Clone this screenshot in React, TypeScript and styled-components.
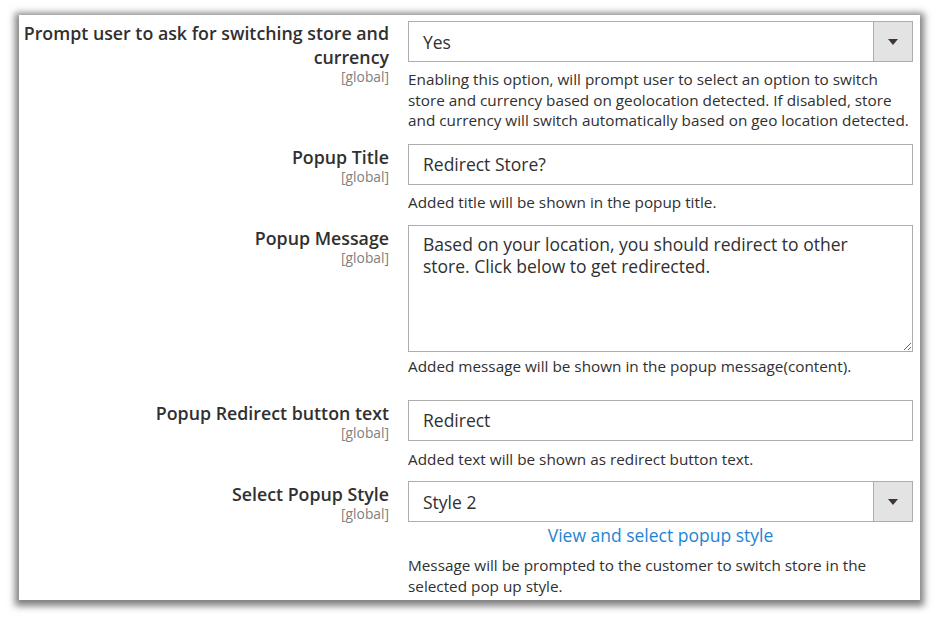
import React from "react";
import styled, { createGlobalStyle } from "styled-components";

const Global = createGlobalStyle`
  html, body { margin: 0; padding: 0; background: #ffffff; }
  body { font-family: "Open Sans", "Noto Sans", sans-serif; color: #303030; }
`;

const Page = styled.div`
  width: 940px;
  height: 617px;
  padding: 15px 20px 0 19px;
  box-sizing: border-box;
`;

const Panel = styled.div`
  width: 901px;
  height: 585px;
  background: #ffffff;
  box-shadow: 0 2px 7px 4px rgba(0, 0, 0, 0.5);
  padding: 6px 7px 0 3px;
  box-sizing: border-box;
  display: flex;
  flex-direction: column;
  overflow: hidden;
`;

const Row = styled.div<{ $gap: number }>`
  display: grid;
  grid-template-columns: 367px 1fr;
  column-gap: 19px;
  margin-bottom: ${(p) => p.$gap}px;
`;

const LabelCol = styled.div<{ $offset: number }>`
  text-align: right;
  padding-top: ${(p) => p.$offset}px;
`;

const Label = styled.div`
  font-size: 17.8px;
  font-weight: 600;
  line-height: 24px;
  color: #303030;
`;

const Scope = styled.div`
  font-size: 13.8px;
  line-height: 15px;
  color: #808080;
  margin-top: 0;
`;

const FieldCol = styled.div`
  display: flex;
  flex-direction: column;
`;

const TextInput = styled.div`
  height: 41px;
  box-sizing: border-box;
  border: 1px solid #adadad;
  padding: 0 14px;
  display: flex;
  align-items: center;
  font-size: 17.5px;
  color: #303030;
`;

const SelectBox = styled.div`
  height: 41px;
  box-sizing: border-box;
  border: 1px solid #adadad;
  display: flex;
  align-items: stretch;
`;

const SelectValue = styled.div`
  flex: 1;
  padding: 0 14px;
  display: flex;
  align-items: center;
  font-size: 17.5px;
  color: #303030;
`;

const SelectArrow = styled.div`
  width: 38px;
  border-left: 1px solid #adadad;
  background: #e3e3e3;
  display: flex;
  align-items: center;
  justify-content: center;
`;

const Triangle = styled.span`
  width: 0;
  height: 0;
  border-left: 5px solid transparent;
  border-right: 5px solid transparent;
  border-top: 6px solid #41362f;
`;

const TextArea = styled.textarea`
  display: block;
  height: 127px;
  box-sizing: border-box;
  border: 1px solid #adadad;
  border-radius: 0;
  padding: 8px 14px;
  margin: 0;
  font-family: "Open Sans", "Noto Sans", sans-serif;
  font-size: 17.5px;
  line-height: 21.5px;
  color: #303030;
  resize: vertical;
  outline: none;
`;

const Note = styled.div<{ $top: number }>`
  margin-top: ${(p) => p.$top}px;
  font-size: 15.3px;
  line-height: 20.5px;
  color: #303030;
`;

const StyleLink = styled.a`
  display: block;
  text-align: center;
  font-size: 17.5px;
  line-height: 23px;
  color: #1f84d4;
  text-decoration: none;
  margin-top: 2px;
`;

function Select({ value }: { value: string }) {
  return (
    <SelectBox>
      <SelectValue>{value}</SelectValue>
      <SelectArrow>
        <Triangle />
      </SelectArrow>
    </SelectBox>
  );
}

export default function App() {
  return (
    <Page>
      <Global />
      <Panel>
        <Row $gap={13}>
          <LabelCol $offset={0}>
            <Label>Prompt user to ask for switching store and currency</Label>
            <Scope>[global]</Scope>
          </LabelCol>
          <FieldCol>
            <Select value="Yes" />
            <Note $top={7}>
              Enabling this option, will prompt user to select an option to switch store and
              currency based on geolocation detected. If disabled, store and currency will
              switch automatically based on geo location detected.
            </Note>
          </FieldCol>
        </Row>
        <Row $gap={13}>
          <LabelCol $offset={1}>
            <Label>Popup Title</Label>
            <Scope>[global]</Scope>
          </LabelCol>
          <FieldCol>
            <TextInput>Redirect Store?</TextInput>
            <Note $top={7}>Added title will be shown in the popup title.</Note>
          </FieldCol>
        </Row>
        <Row $gap={23}>
          <LabelCol $offset={1}>
            <Label>Popup Message</Label>
            <Scope>[global]</Scope>
          </LabelCol>
          <FieldCol>
            <TextArea
              readOnly
              defaultValue="Based on your location, you should redirect to other store. Click below to get redirected."
            />
            <Note $top={4}>Added message will be shown in the popup message(content).</Note>
          </FieldCol>
        </Row>
        <Row $gap={12}>
          <LabelCol $offset={1}>
            <Label>Popup Redirect button text</Label>
            <Scope>[global]</Scope>
          </LabelCol>
          <FieldCol>
            <TextInput>Redirect</TextInput>
            <Note $top={8}>Added text will be shown as redirect button text.</Note>
          </FieldCol>
        </Row>
        <Row $gap={0}>
          <LabelCol $offset={1}>
            <Label>Select Popup Style</Label>
            <Scope>[global]</Scope>
          </LabelCol>
          <FieldCol>
            <Select value="Style 2" />
            <StyleLink href="#">View and select popup style</StyleLink>
            <Note $top={8}>
              Message will be prompted to the customer to switch store in the selected pop up
              style.
            </Note>
          </FieldCol>
        </Row>
      </Panel>
    </Page>
  );
}
